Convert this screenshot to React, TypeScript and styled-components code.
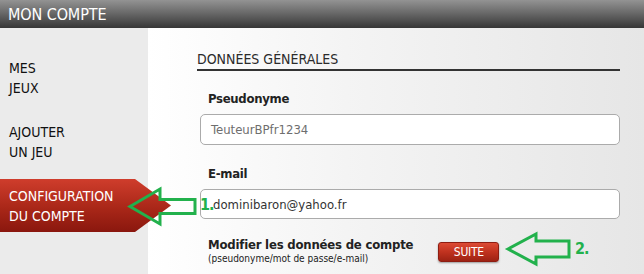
import React from 'react';
import styled, { createGlobalStyle } from 'styled-components';

const GlobalStyle = createGlobalStyle`
  html, body {
    margin: 0;
    padding: 0;
    background: #ffffff;
  }
  * {
    box-sizing: border-box;
  }
`;

const Page = styled.div`
  position: relative;
  width: 644px;
  height: 274px;
  overflow: hidden;
  font-family: "DejaVu Sans Condensed", "DejaVu Sans", sans-serif;
  color: #222;
`;

const Header = styled.header`
  height: 28px;
  padding-left: 8px;
  display: flex;
  align-items: center;
  background: linear-gradient(to bottom, #939393 0%, #6a6a6a 45%, #363636 100%);
  color: #ffffff;
  font-size: 16px;
  letter-spacing: -0.1px;
`;

const Body = styled.div`
  display: grid;
  grid-template-columns: 148px 1fr;
  height: 246px;
`;

const Sidebar = styled.nav`
  background: #ebebeb;
  padding-top: 23px;
  display: flex;
  flex-direction: column;
  gap: 11px;
`;

const NavItem = styled.div<{ $active?: boolean }>`
  position: relative;
  z-index: 1;
  height: 53px;
  width: ${({ $active }) => ($active ? '171px' : '148px')};
  padding: 7px 0 6px 9px;
  font-size: 14px;
  line-height: 20px;
  color: ${({ $active }) => ($active ? '#ffffff' : '#111111')};
  background: ${({ $active }) =>
    $active ? 'linear-gradient(to bottom, #cf3d2c 0%, #a92718 55%, #8a170e 100%)' : 'transparent'};
  clip-path: ${({ $active }) =>
    $active ? 'polygon(0 0, 135px 0, 171px 50%, 135px 100%, 0 100%)' : 'none'};
`;

const Main = styled.main`
  padding: 22px 24px 0 49px;
  background: linear-gradient(to right, #ffffff 0%, #f4f4f4 40%, #e6e6e6 100%);
`;

const SectionTitle = styled.h2`
  margin: 0;
  padding-bottom: 1px;
  font-size: 14px;
  font-weight: normal;
  line-height: 18px;
  color: #2b2b2b;
  border-bottom: 2px solid #333333;
`;

const Field = styled.div<{ $top: number }>`
  margin-top: ${({ $top }) => $top}px;
`;

const Label = styled.div`
  margin-left: 11px;
  font-size: 13px;
  font-weight: bold;
  line-height: 16px;
  letter-spacing: -0.3px;
  color: #222;
`;

const Input = styled.div<{ $muted?: boolean; $height: number }>`
  margin: 7px 0 0 3px;
  height: ${({ $height }) => $height}px;
  padding-left: ${({ $muted }) => ($muted ? '10px' : '12px')};
  display: flex;
  align-items: center;
  background: #ffffff;
  border: 1px solid #ababab;
  border-radius: 5px;
  font-size: 13px;
  color: ${({ $muted }) => ($muted ? '#6e6e6e' : '#333333')};
`;

const ActionRow = styled.div`
  margin: 18px 0 0 11px;
  display: flex;
  align-items: center;
  gap: 25px;
`;

const ActionText = styled.div`
  display: flex;
  flex-direction: column;
`;

const ActionTitle = styled.span`
  font-size: 13px;
  font-weight: bold;
  line-height: 16px;
  letter-spacing: -0.2px;
  color: #222;
`;

const ActionHint = styled.span`
  font-size: 10px;
  line-height: 12px;
  color: #222;
`;

const SuiteButton = styled.button`
  width: 61px;
  height: 20px;
  margin-top: 1px;
  padding: 0;
  border: 1px solid #8e1d12;
  border-radius: 3px;
  background: linear-gradient(to bottom, #dc4a34 0%, #c0321f 50%, #9d2213 100%);
  box-shadow: 0 1px 2px rgba(0, 0, 0, 0.35);
  color: #ffffff;
  font-family: inherit;
  font-size: 12px;
  letter-spacing: -0.3px;
`;

const Annotation = styled.svg`
  position: absolute;
  z-index: 2;
  overflow: visible;
`;

const Step = styled.span`
  position: absolute;
  z-index: 3;
  font-family: "DejaVu Sans Condensed", "DejaVu Sans", sans-serif;
  font-size: 16px;
  font-weight: bold;
  line-height: 16px;
  letter-spacing: -1px;
  color: #22b14c;
`;

const arrowPoints = (w: number, h: number, head: number, shaft: number) => {
  const mid = h / 2;
  return [
    [0, mid],
    [head, 0],
    [head, mid - shaft / 2],
    [w, mid - shaft / 2],
    [w, mid + shaft / 2],
    [head, mid + shaft / 2],
    [head, h],
  ]
    .map((p) => p.join(','))
    .join(' ');
};

const GreenArrow = ({ left, top, w, h, head, shaft }: { left: number; top: number; w: number; h: number; head: number; shaft: number }) => (
  <Annotation style={{ left, top }} width={w} height={h} viewBox={`0 0 ${w} ${h}`}>
    <polygon points={arrowPoints(w, h, head, shaft)} fill="none" stroke="#22b14c" strokeWidth="3" strokeLinejoin="miter" />
  </Annotation>
);

const App = () => {
  return (
    <>
      <GlobalStyle />
      <Page>
        <Header>MON COMPTE</Header>
        <Body>
          <Sidebar>
            <NavItem>MES<br />JEUX</NavItem>
            <NavItem>AJOUTER<br />UN JEU</NavItem>
            <NavItem $active>CONFIGURATION<br />DU COMPTE</NavItem>
          </Sidebar>
          <Main>
            <SectionTitle>DONNÉES GÉNÉRALES</SectionTitle>
            <Field $top={20}>
              <Label>Pseudonyme</Label>
              <Input $muted $height={31}>TeuteurBPfr1234</Input>
            </Field>
            <Field $top={21}>
              <Label>E-mail</Label>
              <Input $height={30}>dominibaron@yahoo.fr</Input>
            </Field>
            <ActionRow>
              <ActionText>
                <ActionTitle>Modifier les données de compte</ActionTitle>
                <ActionHint>(pseudonyme/mot de passe/e-mail)</ActionHint>
              </ActionText>
              <SuiteButton>SUITE</SuiteButton>
            </ActionRow>
          </Main>
        </Body>
        <GreenArrow left={130} top={189} w={65} h={35} head={30} shaft={14} />
        <Step style={{ left: 200, top: 197 }}>1.</Step>
        <GreenArrow left={508} top={234} w={61} h={30} head={28} shaft={16} />
        <Step style={{ left: 575, top: 241 }}>2.</Step>
      </Page>
    </>
  );
};

export default App;
